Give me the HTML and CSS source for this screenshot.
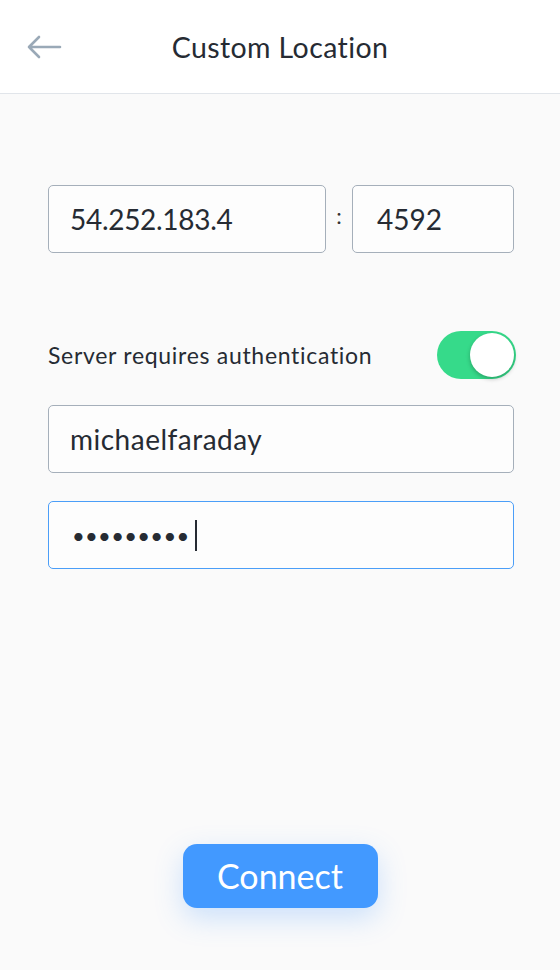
FILE: index.html
```html
<!DOCTYPE html>
<html>
<head>
<meta charset="utf-8">
<link rel="stylesheet" href="styles.css">
</head>
<body>
<div class="page">
  <header class="header">
    <svg class="back" width="36" height="24" viewBox="0 0 36 24">
      <path d="M34 12H3M13 2L3 12l10 10" fill="none" stroke="#9aa9b7" stroke-width="2.6" stroke-linecap="round" stroke-linejoin="round"/>
    </svg>
    <h1 class="title">Custom Location</h1>
  </header>
  <main class="content">
    <div class="host-row">
      <div class="field field-ip">54.252.183.4</div>
      <div class="colon">:</div>
      <div class="field field-port">4592</div>
    </div>
    <div class="auth-row">
      <span class="auth-label">Server requires authentication</span>
      <span class="toggle"><span class="knob"></span></span>
    </div>
    <div class="field field-user">michaelfaraday</div>
    <div class="field field-pass focused"><span class="dots">•••••••••</span><span class="caret"></span></div>
  </main>
  <button class="connect">Connect</button>
</div>
</body>
</html>
```
FILE: styles.css
```css
* { box-sizing: border-box; }
html, body { margin: 0; padding: 0; }
body {
  background: #fafafa;
  font-family: "Lato", "Open Sans", sans-serif;
  color: #262b33;
}
.page {
  min-height: 970px;
  display: flex;
  flex-direction: column;
}
.header {
  height: 94px;
  background: #ffffff;
  border-bottom: 1.5px solid #e1e5ea;
  display: flex;
  align-items: center;
  justify-content: center;
  position: relative;
}
.back {
  position: absolute;
  left: 26px;
  top: 35px;
}
.title {
  margin: 0;
  font-weight: 400;
  font-size: 28.5px;
  letter-spacing: 0.4px;
  color: #262b33;
  padding-top: 1px;
}
.content {
  padding: 0 46px 0 48px;
  display: flex;
  flex-direction: column;
}
.host-row {
  margin-top: 91px;
  display: flex;
  align-items: center;
}
.field {
  height: 68px;
  border: 1.5px solid #a5afba;
  border-radius: 5px;
  background: #fdfdfd;
  display: flex;
  align-items: center;
  padding-left: 21px;
  font-size: 28px;
  color: #262b33;
}
.field-ip { width: 278px; letter-spacing: -0.3px; }
.colon {
  width: 26px;
  text-align: center;
  font-size: 22px;
  color: #333;
  padding-bottom: 8px;
}
.field-port { flex: 1; padding-left: 24px; }
.auth-row {
  margin-top: 78px;
  height: 48px;
  display: flex;
  align-items: center;
  justify-content: space-between;
}
.auth-label {
  font-size: 23px;
  letter-spacing: 0.7px;
  color: #262b33;
  padding-bottom: 1px;
}
.toggle {
  width: 79px;
  height: 48px;
  border-radius: 24px;
  background: #36da8a;
  position: relative;
  margin-right: -2px;
}
.knob {
  position: absolute;
  right: 2px;
  top: 2px;
  width: 44px;
  height: 44px;
  border-radius: 50%;
  background: #ffffff;
  box-shadow: 0 2px 4px rgba(0,0,0,0.25);
}
.field-user { margin-top: 26px; letter-spacing: 0.5px; }
.field-pass { margin-top: 28px; }
.focused { border-color: #4b9ef8; }
.dots {
  font-size: 22px;
  letter-spacing: 0.3px;
  padding-left: 2px;
}
.caret {
  display: inline-block;
  width: 2px;
  height: 31px;
  background: #262b33;
  margin-left: 5px;
}
.connect {
  margin: auto auto 62px;
  width: 195px;
  height: 64px;
  border: none;
  border-radius: 14px;
  background: #4299ff;
  color: #ffffff;
  font-family: "Lato", "Open Sans", sans-serif;
  font-size: 34px;
  box-shadow: 0 10px 28px rgba(66,153,255,0.25);
  padding: 0 0 2px;
}
```
